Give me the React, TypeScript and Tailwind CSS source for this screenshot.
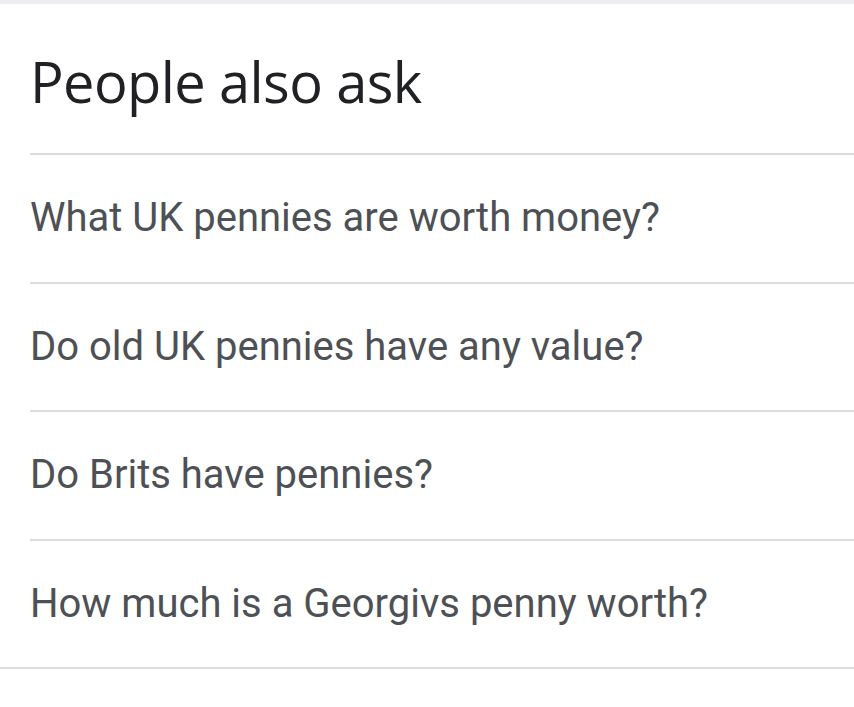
export default function App() {
  const questions = [
    "What UK pennies are worth money?",
    "Do old UK pennies have any value?",
    "Do Brits have pennies?",
    "How much is a Georgivs penny worth?",
  ];

  return (
    <div className="w-[854px] h-[707px] bg-white overflow-hidden">
      <div className="h-[4px] bg-[#eceef1]"></div>
      <div className="h-[149px] pl-[30px] flex items-center pt-[4px]">
        <h2
          className="text-[56px] leading-none text-[#202124] tracking-[-0.6px]"
          style={{ fontFamily: '"Open Sans", sans-serif' }}
        >
          People also ask
        </h2>
      </div>
      <div className="ml-[30px]">
        {questions.map((q) => (
          <div key={q} className="h-[128.5px] border-t-2 border-[#dadce0] flex items-center">
            <span
              className="text-[40px] leading-none text-[#4d5156]"
              style={{ fontFamily: "Roboto, sans-serif" }}
            >
              {q}
            </span>
          </div>
        ))}
      </div>
      <div className="border-t-2 border-[#dadce0]"></div>
    </div>
  );
}
